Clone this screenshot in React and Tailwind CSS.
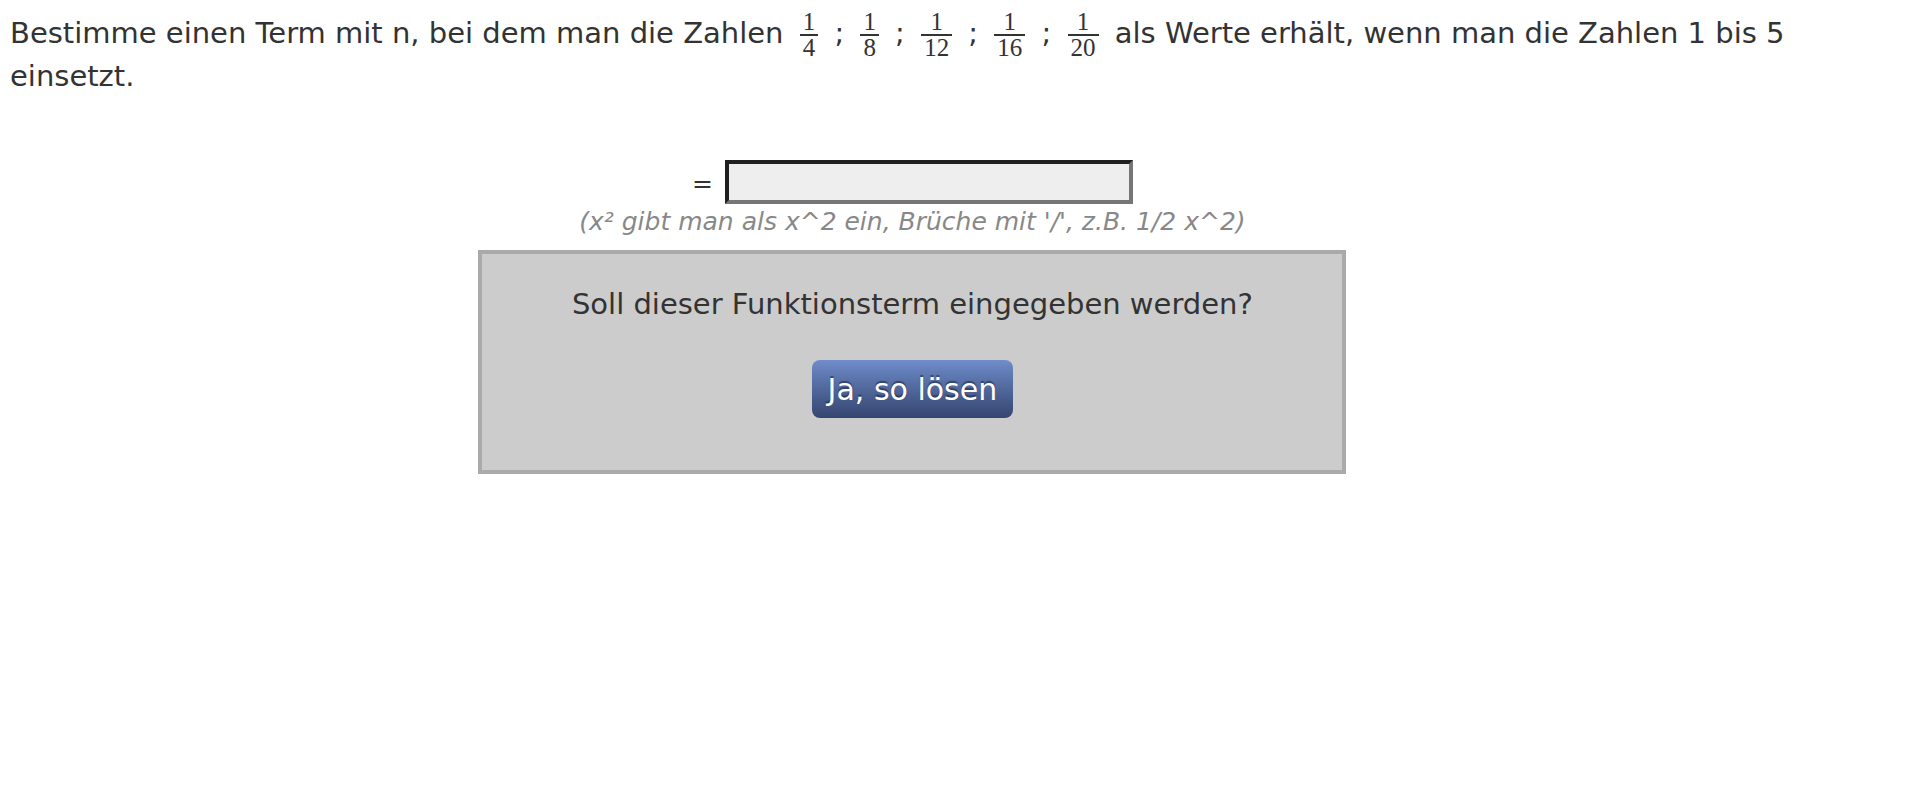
import { Fragment } from "react";

const denominators = [4, 8, 12, 16, 20];

function Fraction({ denominator }) {
  return (
    <span className="mx-[7px] -my-2 inline-flex flex-col items-center align-middle font-['Liberation_Serif',serif] text-[25px] leading-6">
      <span>1</span>
      <span className="border-t-2 border-[#333] px-[3px]">{denominator}</span>
    </span>
  );
}

export default function App() {
  return (
    <main className="w-[94%] ml-[10px] pt-3 font-['DejaVu_Sans',Verdana,sans-serif] text-[29px] leading-[43px] text-[#333]">
      <p>
        Bestimme einen Term mit n, bei dem man die Zahlen{" "}
        {denominators.map((denominator, index) => (
          <Fragment key={denominator}>
            {index > 0 && " ; "}
            <Fraction denominator={denominator} />
          </Fragment>
        ))}{" "}
        als Werte erhält, wenn man die Zahlen 1 bis 5 einsetzt.
      </p>

      <form
        className="mt-[62px] flex flex-col items-center"
        onSubmit={(event) => event.preventDefault()}
      >
        <div className="flex items-center gap-3">
          <label htmlFor="term" className="pt-1 text-[25px] leading-10">
            =
          </label>
          <input
            id="term"
            type="text"
            aria-describedby="hint"
            className="h-11 w-[408px] border-4 border-t-[#1f211e] border-l-[#1f211e] border-r-[#767676] border-b-[#767676] bg-[#eee] px-1 text-[25px] outline-none"
          />
        </div>
        <p id="hint" className="text-[25px] leading-9 text-[#888] italic">
          (x² gibt man als x^2 ein, Brüche mit '/', z.B. 1/2 x^2)
        </p>

        <div className="mt-[10px] flex w-[868px] max-w-full flex-col items-center border-4 border-[#aaa] bg-[#ccc] pt-[29px] pb-[52px]">
          <p>Soll dieser Funktionsterm eingegeben werden?</p>
          <button
            type="submit"
            className="mt-[34px] h-[58px] rounded-lg bg-linear-to-b from-[#6f8ccb] to-[#35456f] px-4 text-[30px] text-white [text-shadow:0_-2px_1px_rgba(0,0,0,0.4)]"
          >
            Ja, so lösen
          </button>
        </div>
      </form>
    </main>
  );
}
